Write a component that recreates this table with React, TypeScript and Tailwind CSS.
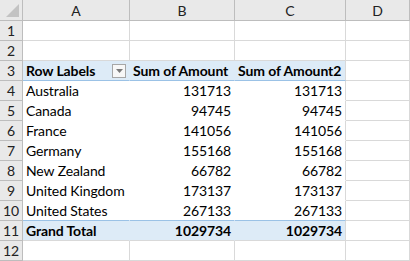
const rows: [string, string, string][] = [
  ['Australia', '131713', '131713'],
  ['Canada', '94745', '94745'],
  ['France', '141056', '141056'],
  ['Germany', '155168', '155168'],
  ['New Zealand', '66782', '66782'],
  ['United Kingdom', '173137', '173137'],
  ['United States', '267133', '267133'],
]

const font = { fontFamily: 'Lato, "Liberation Sans", sans-serif' }

function RowNum({ n }: { n: number }) {
  return (
    <div className="h-5 border-r border-b border-[#bdbdbd] bg-[#e9e9e9] flex items-center justify-center text-[14px] text-[#222]">
      {n}
    </div>
  )
}

function Cell({ children, className = '' }: { children?: React.ReactNode; className?: string }) {
  return (
    <div className={`h-5 flex items-center px-[3px] text-[14px] text-black whitespace-nowrap overflow-hidden tracking-[-0.1px] ${className}`}>
      {children}
    </div>
  )
}

export default function App() {
  const cols = ['A', 'B', 'C', 'D']
  return (
    <div className="w-[410px] h-[261px] bg-white overflow-hidden" style={font}>
      <div className="grid grid-cols-[23px_107px_105px_111px_64px]">
        {/* header row */}
        <div className="h-[21px] border-r border-b border-[#bdbdbd] bg-[#e9e9e9] relative">
          <svg className="absolute right-[3px] bottom-[3px]" width="13" height="13" viewBox="0 0 13 13">
            <polygon points="13,0 13,13 0,13" fill="#c3c3c3" />
          </svg>
        </div>
        {cols.map((c) => (
          <div
            key={c}
            className="h-[21px] border-r border-b border-[#bdbdbd] bg-[#e9e9e9] flex items-center justify-center text-[14px] text-[#222]"
          >
            {c}
          </div>
        ))}

        {/* rows 1-2 */}
        {[1, 2].map((n) => (
          <div key={n} className="contents">
            <RowNum n={n} />
            <Cell className="border-r border-b border-[#d9d9d9]" />
            <Cell className="border-r border-b border-[#d9d9d9]" />
            <Cell className="border-r border-b border-[#d9d9d9]" />
            <Cell className="border-r border-b border-[#d9d9d9]" />
          </div>
        ))}

        {/* row 3: pivot header */}
        <RowNum n={3} />
        <Cell className="bg-[#ddebf7] border-b border-b-[#9bc2e6] border-r border-r-[#ddebf7] justify-between">
          <span className="font-bold">Row Labels</span>
          <span className="w-[14px] h-[14px] border border-[#a6a6a6] bg-[#f7f7f7] flex items-center justify-center">
            <svg width="7" height="4" viewBox="0 0 7 4">
              <polygon points="0,0 7,0 3.5,4" fill="#7a7a7a" />
            </svg>
          </span>
        </Cell>
        <Cell className="bg-[#ddebf7] border-b border-b-[#9bc2e6] border-r border-r-[#ddebf7] font-bold">Sum of Amount</Cell>
        <Cell className="bg-[#ddebf7] border-b border-b-[#9bc2e6] border-r border-r-[#d9d9d9] font-bold">Sum of Amount2</Cell>
        <Cell className="border-r border-b border-[#d9d9d9]" />

        {/* data rows */}
        {rows.map(([name, a, b], i) => {
          const last = i === rows.length - 1
          const bb = last ? 'border-b border-b-[#9bc2e6]' : 'border-b border-b-white'
          return (
            <div key={name} className="contents">
              <RowNum n={i + 4} />
              <Cell className={`${bb} border-r border-r-white`}>{name}</Cell>
              <Cell className={`${bb} border-r border-r-white justify-end`}>{a}</Cell>
              <Cell className={`${bb} border-r border-r-[#d9d9d9] justify-end`}>{b}</Cell>
              <Cell className="border-r border-b border-[#d9d9d9]" />
            </div>
          )
        })}

        {/* row 11: grand total */}
        <RowNum n={11} />
        <Cell className="bg-[#ddebf7] border-b border-b-[#d9d9d9] border-r border-r-[#ddebf7] font-bold">Grand Total</Cell>
        <Cell className="bg-[#ddebf7] border-b border-b-[#d9d9d9] border-r border-r-[#ddebf7] font-bold justify-end">1029734</Cell>
        <Cell className="bg-[#ddebf7] border-b border-b-[#d9d9d9] border-r border-r-[#d9d9d9] font-bold justify-end">1029734</Cell>
        <Cell className="border-r border-b border-[#d9d9d9]" />

        {/* row 12 */}
        <RowNum n={12} />
        <Cell className="border-r border-b border-[#d9d9d9]" />
        <Cell className="border-r border-b border-[#d9d9d9]" />
        <Cell className="border-r border-b border-[#d9d9d9]" />
        <Cell className="border-r border-b border-[#d9d9d9]" />
      </div>
    </div>
  )
}
